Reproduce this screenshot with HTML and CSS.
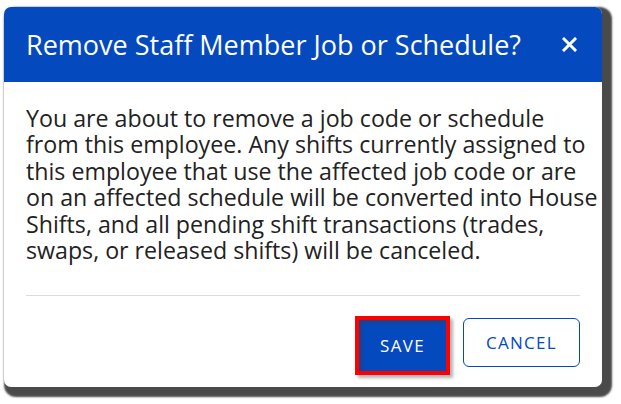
FILE: index.html
```html
<!DOCTYPE html>
<html>
<head>
<meta charset="utf-8">
<link rel="stylesheet" href="styles.css">
</head>
<body>
<div class="dialog">
  <div class="header">
    <h1 class="title">Remove Staff Member Job or Schedule?</h1>
    <span class="close">
      <svg width="15" height="15" viewBox="0 0 15 15"><path d="M2 2 L13 13 M13 2 L2 13" stroke="#fff" stroke-width="3" stroke-linecap="square"/></svg>
    </span>
  </div>
  <div class="body">
    <p class="message">You are about to remove a job code or schedule<br>from this employee. Any shifts currently assigned to<br>this employee that use the affected job code or are<br>on an affected schedule will be converted into House<br>Shifts, and all pending shift transactions (trades,<br>swaps, or released shifts) will be canceled.</p>
    <div class="divider"></div>
    <div class="actions">
      <button class="btn btn-save">SAVE</button>
      <button class="btn btn-cancel">CANCEL</button>
    </div>
  </div>
</div>
</body>
</html>
```
FILE: styles.css
```css
html, body {
  margin: 0;
  padding: 0;
  background: #ffffff;
}
body {
  width: 621px;
  height: 404px;
  overflow: hidden;
  font-family: "Open Sans", "Noto Sans", sans-serif;
}
.dialog {
  margin: 7px 0 0 4px;
  width: 598px;
  height: 380px;
  background: #fff;
  border-radius: 7px;
  box-shadow: 5px 5px 2px 5px #4a4a4a;
  overflow: hidden;
  display: flex;
  flex-direction: column;
}
.header {
  background: #0449be;
  height: 75px;
  display: flex;
  align-items: center;
  justify-content: space-between;
  padding: 0 25px 0 22px;
}
.title {
  margin: 0;
  color: #fff;
  font-weight: 400;
  font-size: 27px;
  letter-spacing: 0;
}
.close {
  display: flex;
  margin-top: 0;
}
.body {
  padding: 23px 22px 0 22px;
  display: flex;
  flex-direction: column;
}
.message {
  margin: 0 -20px 0 0;
  font-size: 23.2px;
  line-height: 26.4px;
  color: #222;
  white-space: nowrap;
}
.divider {
  height: 1px;
  background: #dcdcdc;
  margin-top: 32px;
}
.actions {
  display: flex;
  justify-content: flex-end;
  align-items: flex-start;
  gap: 13px;
  margin-top: 20px;
}
.btn {
  font-family: "Open Sans", "Noto Sans", sans-serif;
  font-size: 17px;
  letter-spacing: 1.3px;
  cursor: pointer;
}
.btn-save {
  width: 95px;
  height: 59px;
  background: #0449be;
  color: #fff;
  border: 4px solid #ff0000;
  box-shadow: inset 3px 3px 3px rgba(60,60,90,0.6), 3px 3px 3px rgba(0,0,0,0.3);
  padding: 0;
}
.btn-cancel {
  width: 117px;
  height: 49px;
  background: #fff;
  color: #0449be;
  border: 1px solid #0449be;
  border-radius: 6px;
  padding: 0;
  margin-top: 2px;
}
```
